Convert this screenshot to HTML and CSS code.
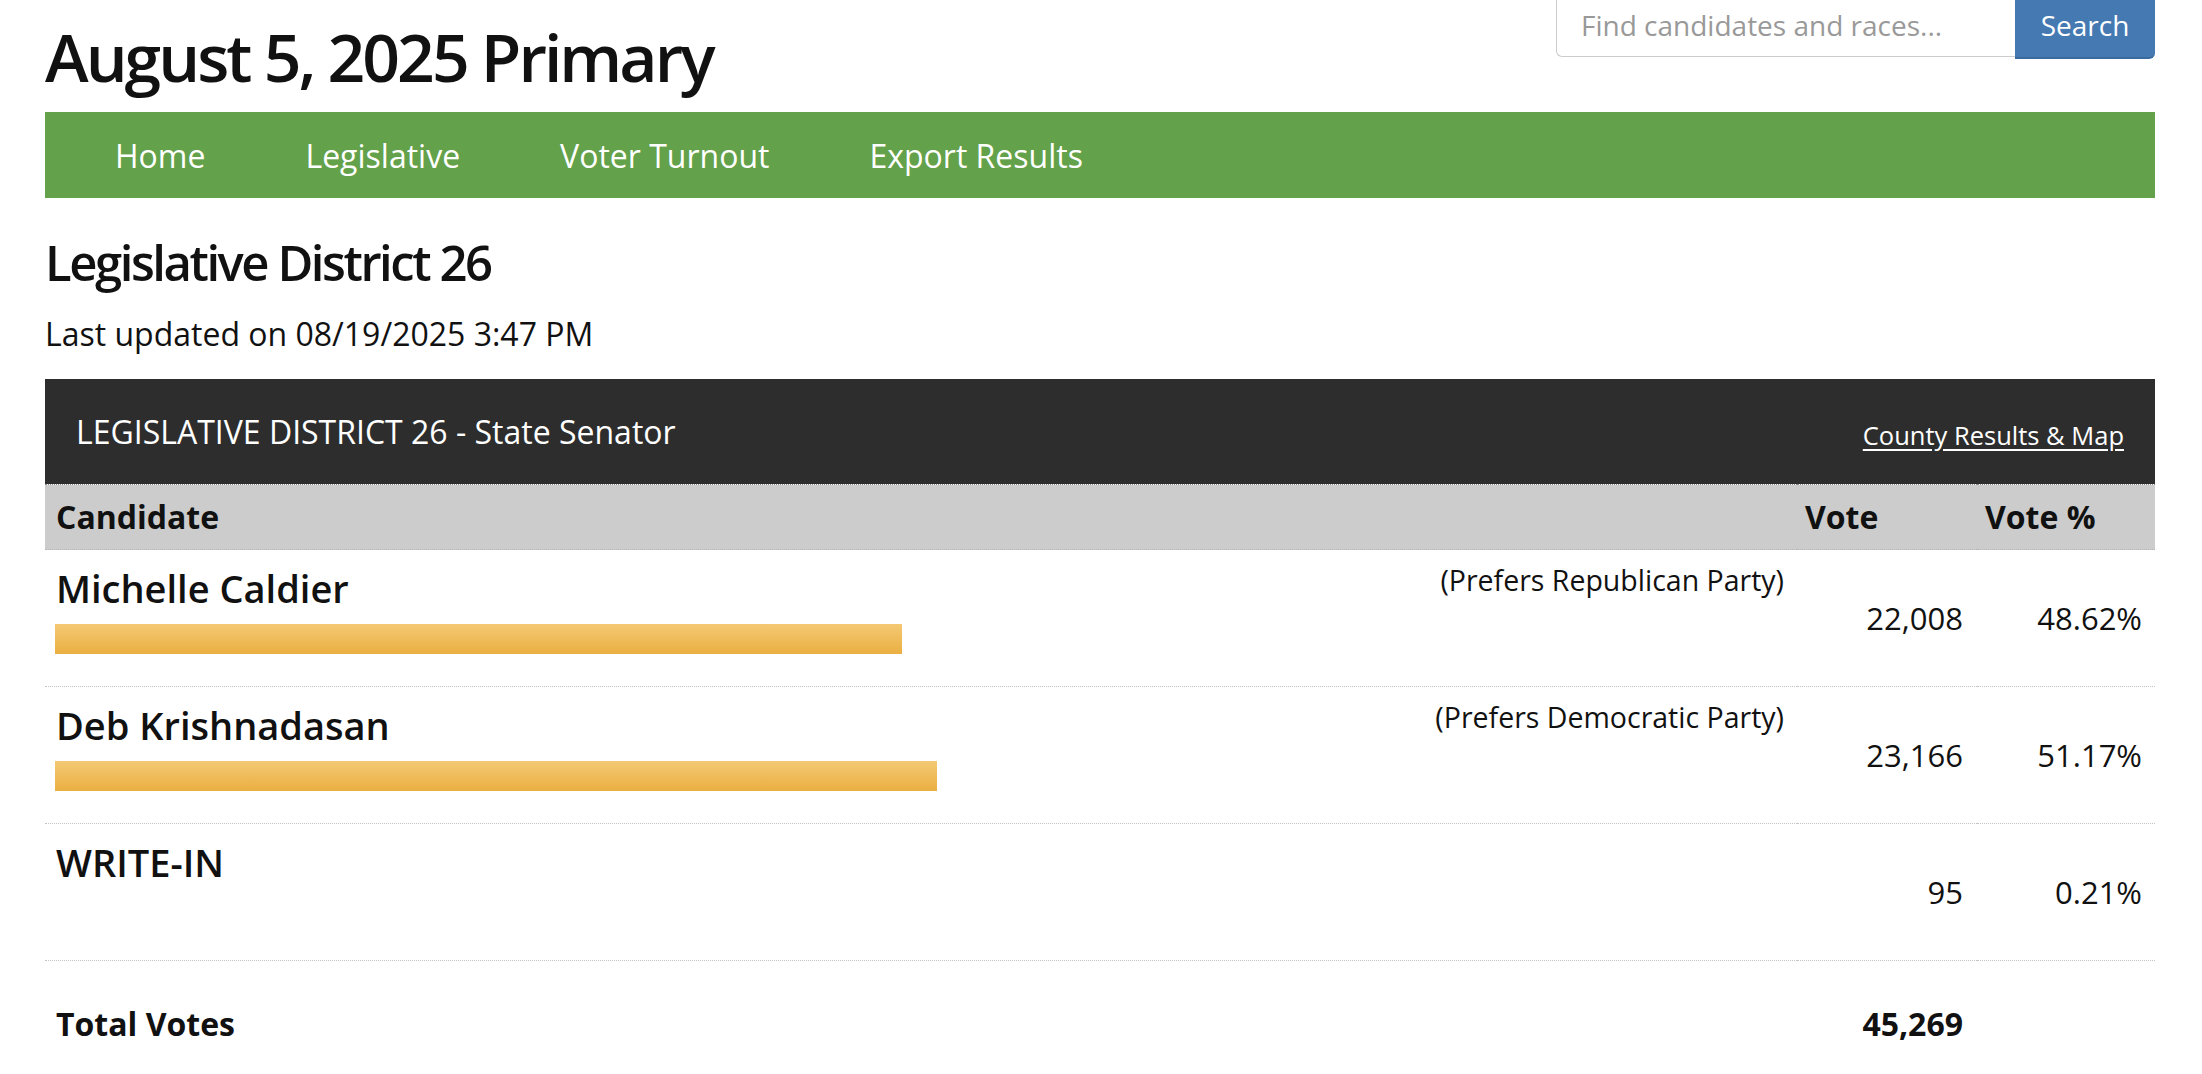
FILE: index.html
```html
<!DOCTYPE html>
<html lang="en">
<head>
<meta charset="utf-8">
<title>August 5, 2025 Primary - Legislative District 26</title>
<link rel="stylesheet" href="styles.css">
</head>
<body>
<div class="page">
  <header class="top">
    <h1 class="title">August 5, 2025 Primary</h1>
    <form class="search" onsubmit="return false">
      <input class="search-input" type="text" placeholder="Find candidates and races...">
      <button class="search-btn" type="submit">Search</button>
    </form>
  </header>

  <nav class="mainnav">
    <a href="#">Home</a>
    <a href="#">Legislative</a>
    <a href="#">Voter Turnout</a>
    <a href="#">Export Results</a>
  </nav>

  <h2 class="district">Legislative District 26</h2>
  <p class="updated">Last updated on 08/19/2025 3:47 PM</p>

  <section class="race">
    <div class="race-head">
      <span class="race-title">LEGISLATIVE DISTRICT 26 - State Senator</span>
      <a class="race-link" href="#">County Results &amp; Map</a>
    </div>
    <table class="results">
      <colgroup>
        <col>
        <col class="col-vote">
        <col class="col-pct">
      </colgroup>
      <thead>
        <tr>
          <th class="h-cand">Candidate</th>
          <th class="h-vote">Vote</th>
          <th class="h-pct">Vote %</th>
        </tr>
      </thead>
      <tbody>
        <tr>
          <td class="cand">
            <div class="cand-top"><span class="name">Michelle Caldier</span><span class="party">(Prefers Republican Party)</span></div>
            <div class="track"><div class="bar" style="width:49%"></div></div>
          </td>
          <td class="num">22,008</td>
          <td class="pct">48.62%</td>
        </tr>
        <tr>
          <td class="cand">
            <div class="cand-top"><span class="name">Deb Krishnadasan</span><span class="party">(Prefers Democratic Party)</span></div>
            <div class="track"><div class="bar" style="width:51%"></div></div>
          </td>
          <td class="num">23,166</td>
          <td class="pct">51.17%</td>
        </tr>
        <tr>
          <td class="cand">
            <div class="cand-top"><span class="name">WRITE-IN</span></div>
            <div class="track"></div>
          </td>
          <td class="num">95</td>
          <td class="pct">0.21%</td>
        </tr>
        <tr class="total">
          <td class="total-label">Total Votes</td>
          <td class="num total-num">45,269</td>
          <td class="pct"></td>
        </tr>
      </tbody>
    </table>
  </section>
</div>
</body>
</html>
```

FILE: styles.css
```css
* { box-sizing: border-box; }

html, body {
  margin: 0;
  padding: 0;
  background: #ffffff;
}

body {
  font-family: "Open Sans", "DejaVu Sans", sans-serif;
  color: #111111;
  overflow: hidden;
}

.page {
  padding: 0 47px 0 45px;
}

/* header */
.top {
  display: flex;
  justify-content: space-between;
  align-items: flex-start;
  margin-bottom: 19px;
}

.title {
  margin: 20px 0 0 0;
  font-size: 66px;
  line-height: 1.1;
  font-weight: 600;
  letter-spacing: -0.045em;
  color: #111;
}

.search {
  display: flex;
  margin-top: -10px;
}

.search-input {
  width: 459px;
  height: 67px;
  border: 1px solid #cccccc;
  border-right: 0;
  border-radius: 0 0 0 6px;
  padding: 2px 24px 0 24px;
  font-family: "Open Sans", sans-serif;
  font-size: 28px;
  color: #555;
  background: #fff;
  box-shadow: inset 0 1px 1px rgba(0,0,0,0.075);
  outline: none;
}

.search-input::placeholder {
  color: #999999;
}

.search-btn {
  width: 140px;
  height: 69px;
  border: 0;
  border-bottom: 2px solid #3a6a9f;
  border-radius: 0 0 6px 0;
  background: #4579b2;
  color: #ffffff;
  font-family: "Open Sans", sans-serif;
  font-size: 28px;
  padding: 2px 0 0 0;
  cursor: pointer;
}

/* nav */
.mainnav {
  display: flex;
  height: 86px;
  background: #63a14a;
  padding-left: 20px;
}

.mainnav a {
  display: block;
  padding: 0 50px;
  line-height: 88px;
  font-size: 32px;
  color: #ffffff;
  text-decoration: none;
}

/* headings */
.district {
  margin: 38px 0 0 0;
  font-size: 49px;
  line-height: 1.1;
  font-weight: 600;
  letter-spacing: -0.05em;
}

.updated {
  margin: 23px 0 0 0;
  font-size: 32px;
  line-height: 1.4;
}

/* race */
.race {
  margin-top: 22px;
}

.race-head {
  display: flex;
  justify-content: space-between;
  align-items: center;
  height: 105px;
  padding: 0 31px;
  background: #2d2d2d;
  color: #ffffff;
}

.race-title {
  font-size: 32px;
}

.race-link {
  font-size: 25.5px;
  color: #ffffff;
  text-decoration: underline;
  text-underline-offset: 4px;
  margin-top: 6px;
}

.results {
  width: 100%;
  border-collapse: collapse;
  table-layout: fixed;
}

.col-vote { width: 180px; }
.col-pct { width: 178px; }

.results th {
  background: #cccccc;
  font-size: 32px;
  font-weight: 700;
  line-height: 38px;
  text-align: left;
  padding: 13px 13px 13px 8px;
  border-top: 1px dotted #8a8a8a;
  border-bottom: 1px dotted #b5b5b5;
}

.results th.h-cand {
  padding-left: 11px;
}

.results td {
  border-bottom: 1px dotted #c4c4c4;
  vertical-align: middle;
}

.cand {
  padding: 16px 13px 32px 10px;
}

.cand-top {
  display: flex;
  justify-content: space-between;
  align-items: flex-start;
}

.name {
  font-size: 38px;
  line-height: 44px;
  font-weight: 600;
  padding-left: 1px;
}

.party {
  font-size: 28.5px;
  line-height: 34px;
  margin-top: -3px;
}

.track {
  height: 30px;
  margin-top: 14px;
}

.bar {
  height: 30px;
  background: linear-gradient(#f4c974, #eaaf41);
}

.num, .pct {
  text-align: right;
  font-size: 31px;
  padding: 0 14px 0 0;
}

.pct {
  padding-right: 13px;
}

.results tr.total td {
  border-bottom: 0;
  padding-top: 44px;
  padding-bottom: 36px;
  line-height: 38px;
}

.total-label {
  font-size: 32px;
  font-weight: 700;
  padding-left: 11px;
}

.total-num {
  font-weight: 700;
  font-size: 32px;
}
```
